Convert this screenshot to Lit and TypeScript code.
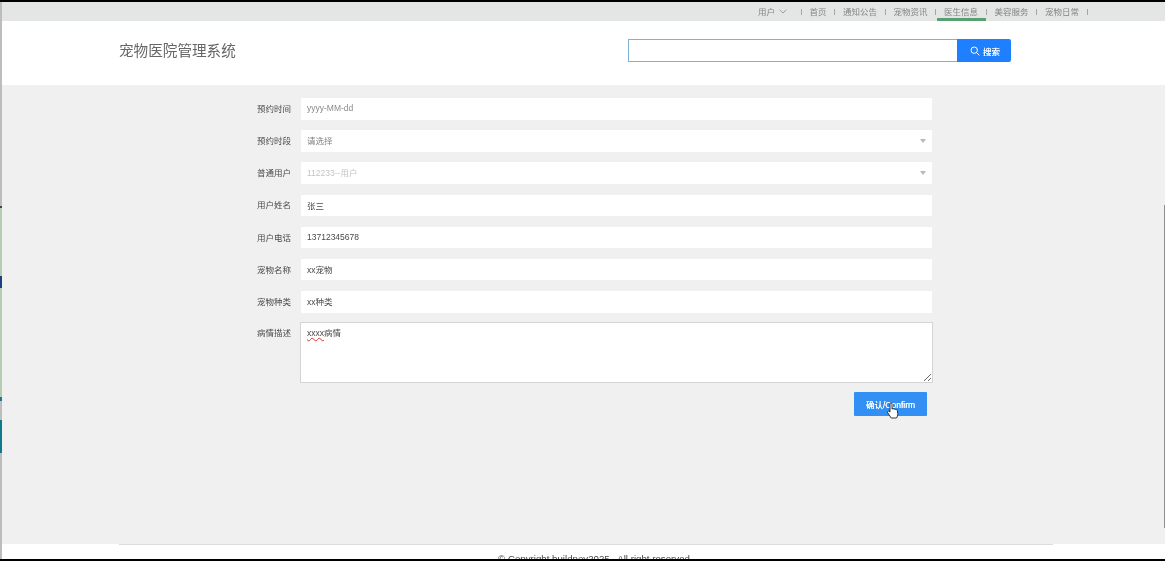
import { LitElement, html, css } from "lit";
import { customElement } from "lit/decorators.js";

const NAV = ["首页", "通知公告", "宠物资讯", "医生信息", "美容服务", "宠物日常"];

@customElement("app-root")
export class AppRoot extends LitElement {
  static styles = css`
    :host {
      display: block;
      position: relative;
      width: 1165px;
      height: 561px;
      overflow: hidden;
      background: #fff;
      font-family: "Liberation Sans", "Noto Sans CJK SC", sans-serif;
      font-size: 8.5px;
      color: #555;
    }
    .page { display: flex; flex-direction: column; height: 561px; filter: blur(0.35px); }
    .topline { height: 2px; background: #000; flex: none; }
    .topbar {
      height: 19px; flex: none; background: #e4e5e5;
      display: flex; justify-content: flex-end; align-items: stretch;
      padding-right: 77px; color: #858585;
    }
    .user { display: flex; align-items: center; gap: 4px; margin-right: 14px; padding-bottom: 1px; }
    .user svg { width: 8px; height: 5px; }
    .item { display: flex; align-items: center; position: relative; padding: 0 9px 1px 7.5px; }
    .item::after {
      content: ""; position: absolute; right: 0; top: 7px; width: 1px; height: 6px; background: #a5a5a5;
    }
    .user-sep { width: 1px; height: 6px; background: #a5a5a5; align-self: center; }
    .item.active::before {
      content: ""; position: absolute; left: 1px; right: 1px; bottom: 0; height: 3px; background: #5a9f70;
    }
    .header {
      height: 64px; flex: none; box-sizing: border-box; display: flex; align-items: center;
      padding: 0 154px 5px 119px; justify-content: space-between; background: #fff;
    }
    .logo { font-size: 14.6px; color: #666; padding-bottom: 2px; }
    .search { display: flex; height: 23px; }
    .search input {
      width: 329px; box-sizing: border-box; height: 23px; border: 1px solid #7fb2d8; border-right: 0;
      background: #fff; outline: none; padding: 0 6px; margin: 0;
    }
    .search button {
      width: 54px; height: 23px; border: 0; padding: 0 0 0 2px; margin: 0; background: #1e7fff; color: #fff;
      display: flex; align-items: center; justify-content: center; gap: 3px;
      font: inherit; border-radius: 0 2px 2px 0; text-shadow: 0 0 0.6px #fff;
    }
    .search svg { width: 10px; height: 10px; }
    .main {
      flex: 1; background: #f0f0f0; padding-top: 13px; min-height: 0;
      display: flex; flex-direction: column; align-items: flex-start;
      padding-left: 241px; box-sizing: border-box;
    }
    .form { width: 691px; display: flex; flex-direction: column; gap: 10.7px; }
    .row { display: flex; gap: 10px; align-items: center; }
    .row.top { align-items: flex-start; }
    label { width: 50px; text-align: right; flex: none; color: #4a4a4a; padding-bottom: 2px; }
    .row.top label { padding: 3px 0 0; }
    .ctl {
      flex: none; width: 631px; height: 21.5px; box-sizing: border-box; background: #fff; border: 0;
      padding: 0 6px 1.5px; margin: 0; font: inherit; color: #4a4a4a; outline: none; position: relative;
      display: flex; align-items: center;
    }
    input.ctl::placeholder { color: #8a8a8a; }
    .ctl.select::after {
      content: ""; position: absolute; right: 6px; top: 9px;
      border: 3.5px solid transparent; border-top: 4px solid #b8b8b8; border-bottom: 0;
    }
    .ctl.muted { color: #c4c4c4; }
    .ctl.placeholder { color: #808080; }
    .area {
      flex: none; width: 633px; height: 61px; margin: -1px 0 0 -1px; box-sizing: border-box; background: #fff;
      border: 1px solid #d4d4d4; padding: 4px 6px; color: #4a4a4a; overflow: auto; resize: both; line-height: 12px;
    }
    .wavy { text-decoration: underline wavy #d33; text-decoration-thickness: 1px; }
    .actions { display: flex; justify-content: flex-end; padding-right: 5px; margin-top: -2.5px; }
    .confirm {
      width: 73px; height: 24px; border: 0; padding: 0; background: #3290f5; color: #fff;
      font: inherit; border-radius: 1px; text-shadow: 0 0 0.6px #fff;
    }
    .footer {
      height: 15px; flex: none; background: #fff; position: relative; overflow: hidden;
      display: flex; justify-content: center;
    }
    .footer .rule { position: absolute; left: 119px; width: 934px; top: 0; height: 1px; background: #dcdcdc; }
    .footer .copy { font-size: 9.7px; color: #444; padding: 9px 0 0 23px; white-space: nowrap; }
    .bottomline { height: 2px; background: #000; flex: none; position: relative; }
    .edge { position: absolute; left: 0; width: 2px; background: #bdbdbd; }
    .edge-l { top: 2px; bottom: 2px; }
    .edge-g { top: 207px; height: 190px; background: #b6cdb5; }
    .edge-d1 { top: 276px; height: 12px; background: #1f3f80; }
    .edge-t1 { top: 397px; height: 4px; background: #1a7a8a; }
    .edge-t2 { top: 420px; height: 33px; background: #11798c; }
    .edge-b { top: 206px; height: 2px; background: #444; }
    .edge-r { position: absolute; right: 0; top: 205px; height: 323px; width: 1px; background: #8f8f8f; }
    .cursor { position: absolute; left: 886px; top: 402px; width: 14px; height: 18px; }
  `;

  render() {
    return html`
      <div class="page">
        <div class="topline"></div>
        <nav class="topbar">
          <div class="user">用户
            <svg viewBox="0 0 8 5" fill="none" stroke="#8a8a8a" stroke-width="0.8"><path d="M.6.8 4 4 7.4.8"/></svg>
          </div>
          <span class="user-sep"></span>
          ${NAV.map((n) => html`<a class="item ${n === "医生信息" ? "active" : ""}">${n}</a>`)}
        </nav>
        <header class="header">
          <div class="logo">宠物医院管理系统</div>
          <div class="search">
            <input aria-label="搜索" />
            <button>
              <svg viewBox="0 0 10 10" fill="none" stroke="#fff" stroke-width="1"><circle cx="4.2" cy="4.2" r="3.2"/><path d="M6.6 6.6 9.4 9.4"/></svg>
              搜索
            </button>
          </div>
        </header>
        <main class="main">
          <div class="form">
            <div class="row"><label>预约时间</label><input class="ctl" placeholder="yyyy-MM-dd" /></div>
            <div class="row"><label>预约时段</label><div class="ctl select placeholder">请选择</div></div>
            <div class="row"><label>普通用户</label><div class="ctl select muted">112233--用户</div></div>
            <div class="row"><label>用户姓名</label><input class="ctl" value="张三" /></div>
            <div class="row"><label>用户电话</label><input class="ctl" value="13712345678" /></div>
            <div class="row"><label>宠物名称</label><input class="ctl" value="xx宠物" /></div>
            <div class="row"><label>宠物种类</label><input class="ctl" value="xx种类" /></div>
            <div class="row top"><label>病情描述</label><div class="area"><span class="wavy">xxxx</span>病情</div></div>
            <div class="actions"><button class="confirm">确认/Confirm</button></div>
          </div>
        </main>
        <footer class="footer">
          <div class="rule"></div>
          <div class="copy">© Copyright buildnov2025 . All right reserved</div>
        </footer>
        <div class="bottomline"></div>
      </div>
      <div class="edge edge-l"></div>
      <div class="edge edge-g"></div>
      <div class="edge edge-b"></div>
      <div class="edge edge-d1"></div>
      <div class="edge edge-t1"></div>
      <div class="edge edge-t2"></div>
      <div class="edge-r"></div>
      <svg class="cursor" viewBox="0 0 14 18">
        <path d="M4 1.5c.8-.8 2-.3 2 .8V7l1-.3c.6-.1 1 .2 1.2.6.6-.4 1.3-.2 1.6.4.6-.3 1.4 0 1.5.7l.4 3.2c.2 1.6-.3 3-1.2 4.4H5.2L1.6 10.6c-.6-.9.5-2 1.4-1.3l1 .8V2.4c0-.3 0-.6 0-.9z" fill="#fff" stroke="#222" stroke-width="0.9" stroke-linejoin="round"/>
      </svg>
    `;
  }
}
